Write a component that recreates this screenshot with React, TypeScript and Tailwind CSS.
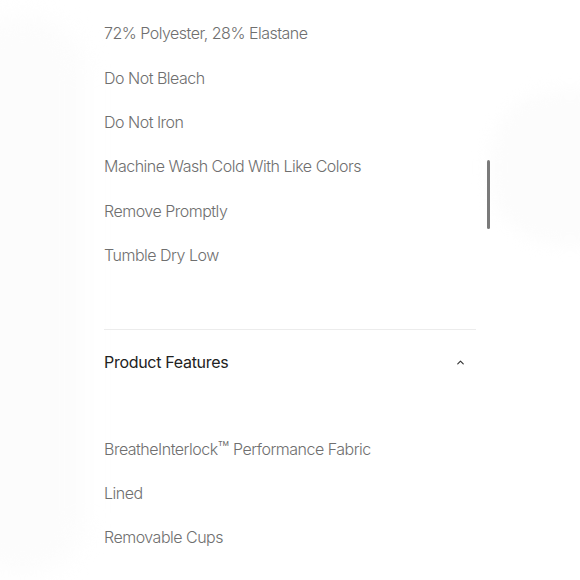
import { ChevronUp } from 'lucide-react';

const careItems = [
  '72% Polyester, 28% Elastane',
  'Do Not Bleach',
  'Do Not Iron',
  'Machine Wash Cold With Like Colors',
  'Remove Promptly',
  'Tumble Dry Low',
];

const ItemRow = ({ children }: { children: React.ReactNode }) => (
  <li className="h-[44.4px] flex items-center text-[16px] font-light text-[#6f6f6f] tracking-[-0.5px]">
    <span>{children}</span>
  </li>
);

const App = () => {
  return (
    <div
      className="relative h-[580px] w-[580px] overflow-hidden bg-white"
      style={{ fontFamily: 'Inter, "Noto Sans", sans-serif' }}
    >
      <div className="pointer-events-none absolute -left-10 top-4 h-[560px] w-[125px] rounded-[60px] bg-[#fcfcfc] blur-md" />
      <div className="pointer-events-none absolute left-[490px] top-[90px] h-[155px] w-[160px] rounded-[70px] bg-[#fcfcfc] blur-sm" />

      <div className="relative ml-[104px] w-[372px] pt-[11px]">
        <ul>
          {careItems.map((item) => (
            <ItemRow key={item}>{item}</ItemRow>
          ))}
        </ul>

        <div className="mt-[52px] border-t border-[#ececec]">
          <button className="flex h-[64px] w-full items-center justify-between pr-[10px] text-left">
            <span className="text-[16px] text-[#222] tracking-[-0.3px]">Product Features</span>
            <ChevronUp className="h-[11px] w-[11px] text-[#333]" strokeWidth={2.5} />
          </button>
        </div>

        <ul className="mt-[32px]">
          <ItemRow>
            BreatheInterlock<span className="text-[19px] leading-none tracking-[0px]">™</span> Performance Fabric
          </ItemRow>
          <ItemRow>Lined</ItemRow>
          <ItemRow>Removable Cups</ItemRow>
        </ul>
      </div>

      <div className="absolute left-[487px] top-[160px] h-[69px] w-[3px] rounded-full bg-[#7a7a7a]" />
    </div>
  );
};

export default App;
